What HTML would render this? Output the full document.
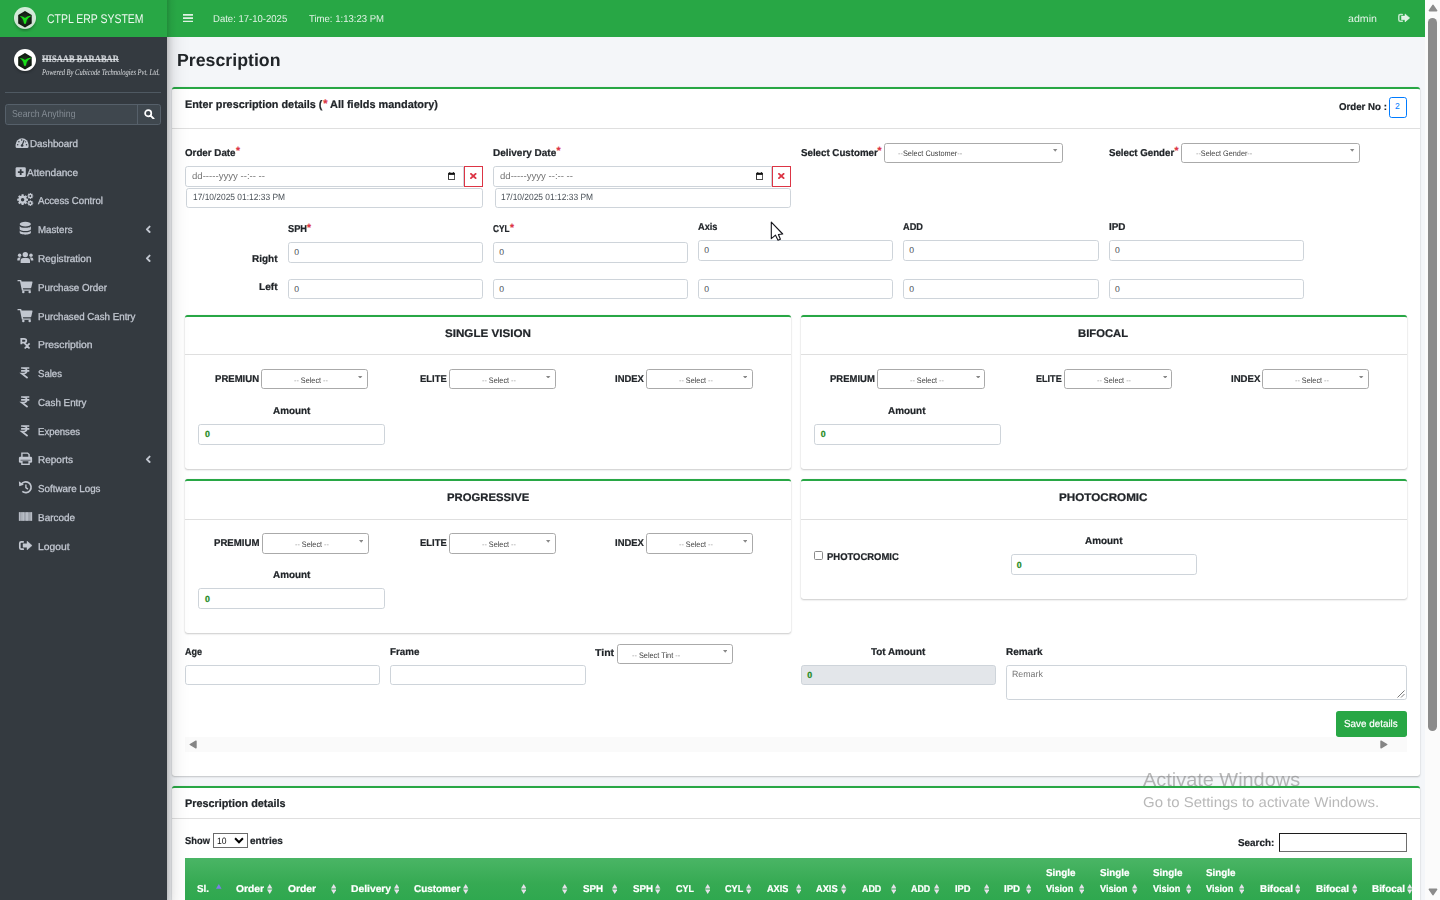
<!DOCTYPE html>
<html lang="en"><head><meta charset="utf-8"><title>Prescription</title>
<style>
html,body{margin:0;padding:0}
html{width:1440px;height:900px;overflow:hidden}
body{width:1440px;height:900px;overflow:hidden;position:relative;background:#f4f6f9;font-family:"Liberation Sans", sans-serif;color:#212529}
body>div,body>span,body>svg{position:absolute;box-sizing:border-box}
.t{white-space:pre;line-height:1;display:block;transform-origin:0 0;text-rendering:geometricPrecision}
.inp{background:#fff;border:1px solid #ced4da;border-radius:2.7px}
.sel{background:#fff;border:1px solid #aaa;border-radius:2.7px}
.card{background:#fff;border-top:2px solid #28a745;border-radius:2.7px;box-shadow:0 0 1px rgba(0,0,0,.125),0 1px 2px rgba(0,0,0,.2)}
</style></head>
<body>
<div class="card" style="left:172px;top:87px;width:1248px;height:689px"></div>
<div style="left:172.00px;top:128.00px;width:1248.00px;height:1.00px;background:#dfdfdf"></div>
<div class="card" style="left:172px;top:786px;width:1248px;height:114px;border-radius:2.7px 2.7px 0 0"></div>
<div style="left:172.00px;top:818.00px;width:1248.00px;height:1.00px;background:#dfdfdf"></div>
<span class="t" style="left:177.00px;top:52.00px;font-size:17.6px;font-weight:700;-webkit-text-stroke:0.22px;color:#212529;transform:scaleX(1.0081);-webkit-text-stroke:0;">Prescription</span>
<span class="t" style="left:185.00px;top:100.00px;font-size:11px;font-weight:700;-webkit-text-stroke:0.22px;color:#212529;transform:scaleX(0.9865);">Enter prescription details (</span>
<span class="t" style="left:323.30px;top:99.00px;font-size:11px;font-weight:700;-webkit-text-stroke:0.22px;color:#dc3545;transform:scaleX(1);">*</span>
<span class="t" style="left:329.50px;top:100.00px;font-size:11px;font-weight:700;-webkit-text-stroke:0.22px;color:#212529;transform:scaleX(0.9927);">All fields mandatory)</span>
<span class="t" style="left:1338.80px;top:103.00px;font-size:10px;font-weight:700;-webkit-text-stroke:0.22px;color:#212529;transform:scaleX(0.9686);">Order No :</span>
<div style="left:1389px;top:97px;width:18px;height:21px;border:1px solid #007bff;border-radius:2.7px;background:#fff"></div>
<span class="t" style="left:1395.10px;top:102.00px;font-size:8.6px;color:#007bff;transform:scaleX(1);">2</span>
<span class="t" style="left:185.00px;top:149.00px;font-size:10px;font-weight:700;-webkit-text-stroke:0.22px;color:#212529;transform:scaleX(0.977);">Order Date</span>
<span class="t" style="left:236.10px;top:147.00px;font-size:10.4px;font-weight:700;-webkit-text-stroke:0.22px;color:#dc3545;transform:scaleX(1);">*</span>
<span class="t" style="left:492.80px;top:149.00px;font-size:10px;font-weight:700;-webkit-text-stroke:0.22px;color:#212529;transform:scaleX(0.9972);">Delivery Date</span>
<span class="t" style="left:556.50px;top:147.00px;font-size:10.4px;font-weight:700;-webkit-text-stroke:0.22px;color:#dc3545;transform:scaleX(1);">*</span>
<span class="t" style="left:800.50px;top:149.00px;font-size:10px;font-weight:700;-webkit-text-stroke:0.22px;color:#212529;transform:scaleX(0.9731);">Select Customer</span>
<span class="t" style="left:877.50px;top:147.00px;font-size:10.4px;font-weight:700;-webkit-text-stroke:0.22px;color:#dc3545;transform:scaleX(1);">*</span>
<span class="t" style="left:1108.50px;top:149.00px;font-size:10px;font-weight:700;-webkit-text-stroke:0.22px;color:#212529;transform:scaleX(0.9693);">Select Gender</span>
<span class="t" style="left:1174.50px;top:147.00px;font-size:10.4px;font-weight:700;-webkit-text-stroke:0.22px;color:#dc3545;transform:scaleX(1);">*</span>
<div class="inp" style="left:185px;top:166px;width:279.2px;height:21px;border-radius:2.7px 0 0 2.7px"></div>
<span class="t" style="left:191.50px;top:171.00px;font-size:9.4px;color:#757575;transform:scaleX(1.0232);">dd-----yyyy --:-- --</span>
<svg style="left:447.7px;top:172.4px" width="7.2" height="8.1" viewBox="0 0 8 9"><path d="M0.5 1.5h7v7h-7z" fill="none" stroke="#111" stroke-width="1"/><path d="M0.5 1h7v2.2h-7z" fill="#111"/><path d="M2 0v1.5M6 0v1.5" stroke="#111" stroke-width="1"/></svg>
<div style="left:463.7px;top:166px;width:19.30000000000001px;height:21px;border:1px solid #dc3545;background:#fff"></div>
<svg style="left:470.3px;top:173px" width="6.6" height="6" viewBox="0 0 6.6 6"><path d="M1 0.9L5.6 5.1M5.6 0.9L1 5.1" stroke="#dc3545" stroke-width="1.9" stroke-linecap="round"/></svg>
<div class="inp" style="left:186.2px;top:188px;width:296.8px;height:20px"></div>
<span class="t" style="left:192.50px;top:193.00px;font-size:9px;color:#495057;transform:scaleX(0.9333);">17/10/2025 01:12:33 PM</span>
<div class="inp" style="left:493.3px;top:166px;width:278.99999999999994px;height:21px;border-radius:2.7px 0 0 2.7px"></div>
<span class="t" style="left:499.80px;top:171.00px;font-size:9.4px;color:#757575;transform:scaleX(1.0232);">dd-----yyyy --:-- --</span>
<svg style="left:755.8px;top:172.4px" width="7.2" height="8.1" viewBox="0 0 8 9"><path d="M0.5 1.5h7v7h-7z" fill="none" stroke="#111" stroke-width="1"/><path d="M0.5 1h7v2.2h-7z" fill="#111"/><path d="M2 0v1.5M6 0v1.5" stroke="#111" stroke-width="1"/></svg>
<div style="left:771.8px;top:166px;width:19.0px;height:21px;border:1px solid #dc3545;background:#fff"></div>
<svg style="left:778.25px;top:173px" width="6.6" height="6" viewBox="0 0 6.6 6"><path d="M1 0.9L5.6 5.1M5.6 0.9L1 5.1" stroke="#dc3545" stroke-width="1.9" stroke-linecap="round"/></svg>
<div class="inp" style="left:494.5px;top:188px;width:296.29999999999995px;height:20px"></div>
<span class="t" style="left:500.80px;top:193.00px;font-size:9px;color:#495057;transform:scaleX(0.9333);">17/10/2025 01:12:33 PM</span>
<div class="sel" style="left:884px;top:143px;width:179px;height:20px"></div>
<span class="t" style="left:898.30px;top:150.00px;font-size:8px;color:#404040;transform:scaleX(0.9198);"><span style="color:#a2a2a2">--</span>Select Customer<span style="color:#a2a2a2">--</span></span>
<svg style="left:1053.4px;top:149.4px" width="4.4" height="2.7" viewBox="0 0 4.4 2.7"><path d="M0 0h4.4L2.2 2.7z" fill="#888"/></svg>
<div class="sel" style="left:1181px;top:143px;width:179px;height:20px"></div>
<span class="t" style="left:1195.50px;top:150.00px;font-size:8px;color:#404040;transform:scaleX(0.9094);"><span style="color:#a2a2a2">--</span>Select Gender<span style="color:#a2a2a2">--</span></span>
<svg style="left:1350.4px;top:149.4px" width="4.4" height="2.7" viewBox="0 0 4.4 2.7"><path d="M0 0h4.4L2.2 2.7z" fill="#888"/></svg>
<span class="t" style="left:287.75px;top:225.00px;font-size:10px;font-weight:700;-webkit-text-stroke:0.22px;color:#212529;transform:scaleX(0.924);">SPH</span>
<span class="t" style="left:307.10px;top:224.00px;font-size:10.4px;font-weight:700;-webkit-text-stroke:0.22px;color:#dc3545;transform:scaleX(1);">*</span>
<span class="t" style="left:492.80px;top:225.00px;font-size:10px;font-weight:700;-webkit-text-stroke:0.22px;color:#212529;transform:scaleX(0.825);">CYL</span>
<span class="t" style="left:510.10px;top:224.00px;font-size:10.4px;font-weight:700;-webkit-text-stroke:0.22px;color:#dc3545;transform:scaleX(1);">*</span>
<span class="t" style="left:697.80px;top:223.00px;font-size:10px;font-weight:700;-webkit-text-stroke:0.22px;color:#212529;transform:scaleX(0.9231);">Axis</span>
<span class="t" style="left:902.80px;top:223.00px;font-size:10px;font-weight:700;-webkit-text-stroke:0.22px;color:#212529;transform:scaleX(0.9182);">ADD</span>
<span class="t" style="left:1108.50px;top:223.00px;font-size:10px;font-weight:700;-webkit-text-stroke:0.22px;color:#212529;transform:scaleX(0.9897);">IPD</span>
<span class="t" style="left:252.00px;top:255.00px;font-size:10px;font-weight:700;-webkit-text-stroke:0.22px;color:#212529;transform:scaleX(0.9982);">Right</span>
<span class="t" style="left:259.00px;top:283.00px;font-size:10px;font-weight:700;-webkit-text-stroke:0.22px;color:#212529;transform:scaleX(1.0085);">Left</span>
<div class="inp" style="left:288.25px;top:242.2px;width:195px;height:20.7px"></div>
<span class="t" style="left:294.15px;top:248.00px;font-size:8.6px;color:#3f464d;transform:scaleX(1);">0</span>
<div class="inp" style="left:288.25px;top:279.2px;width:195px;height:19.7px"></div>
<span class="t" style="left:294.15px;top:285.00px;font-size:8.6px;color:#3f464d;transform:scaleX(1);">0</span>
<div class="inp" style="left:493.3px;top:242.2px;width:195px;height:20.7px"></div>
<span class="t" style="left:499.20px;top:248.00px;font-size:8.6px;color:#3f464d;transform:scaleX(1);">0</span>
<div class="inp" style="left:493.3px;top:279.2px;width:195px;height:19.7px"></div>
<span class="t" style="left:499.20px;top:285.00px;font-size:8.6px;color:#3f464d;transform:scaleX(1);">0</span>
<div class="inp" style="left:698.3px;top:240.2px;width:195px;height:20.7px"></div>
<span class="t" style="left:704.20px;top:246.00px;font-size:8.6px;color:#3f464d;transform:scaleX(1);">0</span>
<div class="inp" style="left:698.3px;top:279.2px;width:195px;height:19.7px"></div>
<span class="t" style="left:704.20px;top:285.00px;font-size:8.6px;color:#3f464d;transform:scaleX(1);">0</span>
<div class="inp" style="left:903.3px;top:240.2px;width:195.8px;height:20.7px"></div>
<span class="t" style="left:909.20px;top:246.00px;font-size:8.6px;color:#3f464d;transform:scaleX(1);">0</span>
<div class="inp" style="left:903.3px;top:279.2px;width:195.8px;height:19.7px"></div>
<span class="t" style="left:909.20px;top:285.00px;font-size:8.6px;color:#3f464d;transform:scaleX(1);">0</span>
<div class="inp" style="left:1109px;top:240.2px;width:195px;height:20.7px"></div>
<span class="t" style="left:1114.90px;top:246.00px;font-size:8.6px;color:#3f464d;transform:scaleX(1);">0</span>
<div class="inp" style="left:1109px;top:279.2px;width:195px;height:19.7px"></div>
<span class="t" style="left:1114.90px;top:285.00px;font-size:8.6px;color:#3f464d;transform:scaleX(1);">0</span>
<div class="card" style="left:185px;top:314.6px;width:606px;height:154.39999999999998px"></div>
<div style="left:185.00px;top:354.00px;width:606.00px;height:1.00px;background:#dfdfdf"></div>
<span class="t" style="left:445.00px;top:329.00px;font-size:11px;font-weight:700;-webkit-text-stroke:0.22px;color:#212529;transform:scaleX(1.0566);">SINGLE VISION</span>
<span class="t" style="left:214.80px;top:375.00px;font-size:9.8px;font-weight:700;-webkit-text-stroke:0.22px;color:#212529;transform:scaleX(0.9759);">PREMIUN</span>
<div class="sel" style="left:261.1px;top:369.2px;width:106.69999999999999px;height:19.80000000000001px"></div>
<span class="t" style="left:293.90px;top:377.00px;font-size:8px;color:#404040;transform:scaleX(0.9078);"><span style="color:#a2a2a2">--</span> Select <span style="color:#a2a2a2">--</span></span>
<svg style="left:358.2px;top:375.5px" width="4.4" height="2.7" viewBox="0 0 4.4 2.7"><path d="M0 0h4.4L2.2 2.7z" fill="#888"/></svg>
<span class="t" style="left:419.70px;top:375.00px;font-size:9.8px;font-weight:700;-webkit-text-stroke:0.22px;color:#212529;transform:scaleX(0.9616);">ELITE</span>
<div class="sel" style="left:449.1px;top:369.2px;width:106.69999999999993px;height:19.80000000000001px"></div>
<span class="t" style="left:481.50px;top:377.00px;font-size:8px;color:#404040;transform:scaleX(0.9078);"><span style="color:#a2a2a2">--</span> Select <span style="color:#a2a2a2">--</span></span>
<svg style="left:546.1999999999999px;top:375.5px" width="4.4" height="2.7" viewBox="0 0 4.4 2.7"><path d="M0 0h4.4L2.2 2.7z" fill="#888"/></svg>
<span class="t" style="left:615.30px;top:375.00px;font-size:9.8px;font-weight:700;-webkit-text-stroke:0.22px;color:#212529;transform:scaleX(0.9648);">INDEX</span>
<div class="sel" style="left:646.4px;top:369.2px;width:106.30000000000007px;height:19.80000000000001px"></div>
<span class="t" style="left:678.80px;top:377.00px;font-size:8px;color:#404040;transform:scaleX(0.9078);"><span style="color:#a2a2a2">--</span> Select <span style="color:#a2a2a2">--</span></span>
<svg style="left:743.1px;top:375.5px" width="4.4" height="2.7" viewBox="0 0 4.4 2.7"><path d="M0 0h4.4L2.2 2.7z" fill="#888"/></svg>
<span class="t" style="left:272.60px;top:407.00px;font-size:10px;font-weight:700;-webkit-text-stroke:0.22px;color:#212529;transform:scaleX(0.9899);">Amount</span>
<div class="inp" style="left:198px;top:424.3px;width:187.10000000000002px;height:20.7px"></div>
<span class="t" style="left:204.90px;top:430.00px;font-size:8.8px;font-weight:700;-webkit-text-stroke:0.22px;color:#1e8a1e;transform:scaleX(1);">0</span>
<div class="card" style="left:801px;top:314.6px;width:606px;height:154.39999999999998px"></div>
<div style="left:801.00px;top:354.00px;width:606.00px;height:1.00px;background:#dfdfdf"></div>
<span class="t" style="left:1078.40px;top:329.00px;font-size:11px;font-weight:700;-webkit-text-stroke:0.22px;color:#212529;transform:scaleX(1.0247);">BIFOCAL</span>
<span class="t" style="left:830.10px;top:375.00px;font-size:9.8px;font-weight:700;-webkit-text-stroke:0.22px;color:#212529;transform:scaleX(0.9683);">PREMIUM</span>
<div class="sel" style="left:877.1px;top:369.2px;width:108.29999999999995px;height:19.80000000000001px"></div>
<span class="t" style="left:909.70px;top:377.00px;font-size:8px;color:#404040;transform:scaleX(0.9078);"><span style="color:#a2a2a2">--</span> Select <span style="color:#a2a2a2">--</span></span>
<svg style="left:975.8px;top:375.5px" width="4.4" height="2.7" viewBox="0 0 4.4 2.7"><path d="M0 0h4.4L2.2 2.7z" fill="#888"/></svg>
<span class="t" style="left:1036.00px;top:375.00px;font-size:9.8px;font-weight:700;-webkit-text-stroke:0.22px;color:#212529;transform:scaleX(0.9256);">ELITE</span>
<div class="sel" style="left:1064.4px;top:369.2px;width:108.0px;height:19.80000000000001px"></div>
<span class="t" style="left:1097.00px;top:377.00px;font-size:8px;color:#404040;transform:scaleX(0.9105);"><span style="color:#a2a2a2">--</span> Select <span style="color:#a2a2a2">--</span></span>
<svg style="left:1162.8000000000002px;top:375.5px" width="4.4" height="2.7" viewBox="0 0 4.4 2.7"><path d="M0 0h4.4L2.2 2.7z" fill="#888"/></svg>
<span class="t" style="left:1230.50px;top:375.00px;font-size:9.8px;font-weight:700;-webkit-text-stroke:0.22px;color:#212529;transform:scaleX(0.9815);">INDEX</span>
<div class="sel" style="left:1262.1px;top:369.2px;width:106.90000000000009px;height:19.80000000000001px"></div>
<span class="t" style="left:1294.50px;top:377.00px;font-size:8px;color:#404040;transform:scaleX(0.9078);"><span style="color:#a2a2a2">--</span> Select <span style="color:#a2a2a2">--</span></span>
<svg style="left:1359.4px;top:375.5px" width="4.4" height="2.7" viewBox="0 0 4.4 2.7"><path d="M0 0h4.4L2.2 2.7z" fill="#888"/></svg>
<span class="t" style="left:888.40px;top:407.00px;font-size:10px;font-weight:700;-webkit-text-stroke:0.22px;color:#212529;transform:scaleX(0.9926);">Amount</span>
<div class="inp" style="left:813.9px;top:424.3px;width:186.89999999999998px;height:20.7px"></div>
<span class="t" style="left:820.80px;top:430.00px;font-size:8.8px;font-weight:700;-webkit-text-stroke:0.22px;color:#1e8a1e;transform:scaleX(1);">0</span>
<div class="card" style="left:185px;top:479px;width:606px;height:154.29999999999995px"></div>
<div style="left:185.00px;top:519.00px;width:606.00px;height:1.00px;background:#dfdfdf"></div>
<span class="t" style="left:446.80px;top:493.00px;font-size:11px;font-weight:700;-webkit-text-stroke:0.22px;color:#212529;transform:scaleX(1.0277);">PROGRESSIVE</span>
<span class="t" style="left:213.90px;top:539.00px;font-size:9.8px;font-weight:700;-webkit-text-stroke:0.22px;color:#212529;transform:scaleX(0.9813);">PREMIUM</span>
<div class="sel" style="left:262.4px;top:533.2px;width:106.30000000000001px;height:20.799999999999955px"></div>
<span class="t" style="left:294.70px;top:541.00px;font-size:8px;color:#404040;transform:scaleX(0.9078);"><span style="color:#a2a2a2">--</span> Select <span style="color:#a2a2a2">--</span></span>
<svg style="left:359.09999999999997px;top:540.0px" width="4.4" height="2.7" viewBox="0 0 4.4 2.7"><path d="M0 0h4.4L2.2 2.7z" fill="#888"/></svg>
<span class="t" style="left:419.70px;top:539.00px;font-size:9.8px;font-weight:700;-webkit-text-stroke:0.22px;color:#212529;transform:scaleX(0.9616);">ELITE</span>
<div class="sel" style="left:449.1px;top:533.2px;width:106.69999999999993px;height:20.799999999999955px"></div>
<span class="t" style="left:481.50px;top:541.00px;font-size:8px;color:#404040;transform:scaleX(0.9078);"><span style="color:#a2a2a2">--</span> Select <span style="color:#a2a2a2">--</span></span>
<svg style="left:546.1999999999999px;top:540.0px" width="4.4" height="2.7" viewBox="0 0 4.4 2.7"><path d="M0 0h4.4L2.2 2.7z" fill="#888"/></svg>
<span class="t" style="left:615.30px;top:539.00px;font-size:9.8px;font-weight:700;-webkit-text-stroke:0.22px;color:#212529;transform:scaleX(0.9648);">INDEX</span>
<div class="sel" style="left:646.4px;top:533.2px;width:106.30000000000007px;height:20.799999999999955px"></div>
<span class="t" style="left:678.80px;top:541.00px;font-size:8px;color:#404040;transform:scaleX(0.9078);"><span style="color:#a2a2a2">--</span> Select <span style="color:#a2a2a2">--</span></span>
<svg style="left:743.1px;top:540.0px" width="4.4" height="2.7" viewBox="0 0 4.4 2.7"><path d="M0 0h4.4L2.2 2.7z" fill="#888"/></svg>
<span class="t" style="left:272.60px;top:571.00px;font-size:10px;font-weight:700;-webkit-text-stroke:0.22px;color:#212529;transform:scaleX(0.9899);">Amount</span>
<div class="inp" style="left:198px;top:588.3px;width:187.10000000000002px;height:20.7px"></div>
<span class="t" style="left:204.90px;top:595.00px;font-size:8.8px;font-weight:700;-webkit-text-stroke:0.22px;color:#1e8a1e;transform:scaleX(1);">0</span>
<div class="card" style="left:801px;top:479px;width:606px;height:120px"></div>
<div style="left:801.00px;top:519.00px;width:606.00px;height:1.00px;background:#dfdfdf"></div>
<span class="t" style="left:1059.40px;top:493.00px;font-size:11px;font-weight:700;-webkit-text-stroke:0.22px;color:#212529;transform:scaleX(1.0595);">PHOTOCROMIC</span>
<div style="left:814px;top:551.4px;width:8.8px;height:8.8px;border:1px solid #8a8a8a;border-radius:1.6px;background:#fff"></div>
<span class="t" style="left:826.50px;top:553.00px;font-size:9.8px;font-weight:700;-webkit-text-stroke:0.22px;color:#212529;transform:scaleX(0.9652);">PHOTOCROMIC</span>
<span class="t" style="left:1084.70px;top:537.00px;font-size:10px;font-weight:700;-webkit-text-stroke:0.22px;color:#212529;transform:scaleX(0.9926);">Amount</span>
<div class="inp" style="left:1010.7px;top:554.2px;width:186px;height:21px"></div>
<span class="t" style="left:1016.80px;top:561.00px;font-size:8.8px;font-weight:700;-webkit-text-stroke:0.22px;color:#1e8a1e;transform:scaleX(1);">0</span>
<span class="t" style="left:184.90px;top:648.00px;font-size:10px;font-weight:700;-webkit-text-stroke:0.22px;color:#212529;transform:scaleX(0.9045);">Age</span>
<div class="inp" style="left:184.7px;top:665.4px;width:195.1px;height:19.4px"></div>
<span class="t" style="left:390.40px;top:648.00px;font-size:10px;font-weight:700;-webkit-text-stroke:0.22px;color:#212529;transform:scaleX(0.9795);">Frame</span>
<div class="inp" style="left:390px;top:665.4px;width:196px;height:19.4px"></div>
<span class="t" style="left:595.30px;top:649.00px;font-size:10px;font-weight:700;-webkit-text-stroke:0.22px;color:#212529;transform:scaleX(1.052);">Tint</span>
<div class="sel" style="left:617.1px;top:644px;width:115.60000000000002px;height:19.799999999999955px"></div>
<span class="t" style="left:631.70px;top:652.00px;font-size:8px;color:#404040;transform:scaleX(0.917);"><span style="color:#a2a2a2">--</span> Select Tint <span style="color:#a2a2a2">--</span></span>
<svg style="left:723.1px;top:650.3px" width="4.4" height="2.7" viewBox="0 0 4.4 2.7"><path d="M0 0h4.4L2.2 2.7z" fill="#888"/></svg>
<span class="t" style="left:871.20px;top:648.00px;font-size:10px;font-weight:700;-webkit-text-stroke:0.22px;color:#212529;transform:scaleX(0.9857);">Tot Amount</span>
<div class="inp" style="left:800.8px;top:665.2px;width:195.5px;height:19.4px;background:#e3e6ea"></div>
<span class="t" style="left:807.30px;top:671.00px;font-size:8.8px;font-weight:700;-webkit-text-stroke:0.22px;color:#1e8a1e;transform:scaleX(1);">0</span>
<span class="t" style="left:1006.20px;top:648.00px;font-size:10px;font-weight:700;-webkit-text-stroke:0.22px;color:#212529;transform:scaleX(0.9972);">Remark</span>
<div class="inp" style="left:1006.2px;top:665.2px;width:400.8px;height:34.4px"></div>
<span class="t" style="left:1012.00px;top:670.00px;font-size:9px;color:#757575;transform:scaleX(0.9773);">Remark</span>
<svg style="left:1397px;top:690px" width="8" height="8" viewBox="0 0 8 8"><path d="M7.5 0.5L0.5 7.5M7.5 4L4 7.5" stroke="#555" stroke-width="0.8"/></svg>
<div style="left:1336.2px;top:711.3px;width:70.8px;height:25.3px;background:#28a745;border-radius:2.7px"></div>
<span class="t" style="left:1344.30px;top:720.00px;font-size:10.2px;color:#fff;transform:scaleX(0.9676);-webkit-text-stroke:0.2px #fff;">Save details</span>
<div style="left:185.00px;top:736.60px;width:1222.00px;height:15.40px;background:#fafafa"></div>
<svg style="left:189px;top:740px" width="8" height="9" viewBox="0 0 8 9"><path d="M7 1.2v6.6L1.2 4.5z" fill="#858585" stroke="#858585" stroke-width="1.4" stroke-linejoin="round"/></svg>
<svg style="left:1380.4px;top:740px" width="8" height="9" viewBox="0 0 8 9"><path d="M1 1.2v6.6L6.8 4.5z" fill="#858585" stroke="#858585" stroke-width="1.4" stroke-linejoin="round"/></svg>
<span class="t" style="left:185.10px;top:799.00px;font-size:11px;font-weight:700;-webkit-text-stroke:0.22px;color:#212529;transform:scaleX(0.9844);">Prescription details</span>
<span class="t" style="left:185.10px;top:837.00px;font-size:10px;font-weight:700;-webkit-text-stroke:0.22px;color:#212529;transform:scaleX(0.9336);">Show</span>
<div style="left:213px;top:833px;width:35px;height:15px;border:1px solid #6b6b6b;background:#fff"></div>
<span class="t" style="left:216.60px;top:837.00px;font-size:9.2px;color:#111;transform:scaleX(0.9282);">10</span>
<svg style="left:234px;top:837.2px" width="10" height="7" viewBox="0 0 10 7"><path d="M1.1 1.2L5 5.2L8.9 1.2" fill="none" stroke="#000" stroke-width="2"/></svg>
<span class="t" style="left:250.40px;top:837.00px;font-size:10px;font-weight:700;-webkit-text-stroke:0.22px;color:#212529;transform:scaleX(1.0031);">entries</span>
<span class="t" style="left:1237.70px;top:839.00px;font-size:10px;font-weight:700;-webkit-text-stroke:0.22px;color:#212529;transform:scaleX(0.9867);">Search:</span>
<div style="left:1279.3px;top:833.4px;width:127.7px;height:18.4px;border:1.3px solid;border-color:#1c1c1c #6e6e6e #6e6e6e #1c1c1c;background:#fff"></div>
<div style="left:185.00px;top:857.80px;width:1227.00px;height:42.20px;background:linear-gradient(180deg,#4ab565 0%,#36aa53 60%,#2fa84f 100%)"></div>
<span class="t" style="left:197.10px;top:885.00px;font-size:10px;font-weight:700;-webkit-text-stroke:0.22px;color:#fff;transform:scaleX(0.9808);">Sl.</span>
<svg style="left:216.1px;top:884.4px" width="5.6" height="4.8" viewBox="0 0 5.6 4.8"><path d="M2.8 0L5.6 4.8H0z" fill="#7d7de8"/></svg>
<span class="t" style="left:236.20px;top:885.00px;font-size:10px;font-weight:700;-webkit-text-stroke:0.22px;color:#fff;transform:scaleX(1.0281);">Order</span>
<svg style="left:267.3px;top:884.4px" width="5.4" height="10.2" viewBox="0 0 5.4 10.2"><path d="M2.7 0L5.4 4.4H0z" fill="#e6e2ea"/><path d="M0 5.6h5.4L2.7 10z" fill="#e6e2ea"/></svg>
<span class="t" style="left:287.70px;top:885.00px;font-size:10px;font-weight:700;-webkit-text-stroke:0.22px;color:#fff;transform:scaleX(1.0318);">Order</span>
<svg style="left:330.90000000000003px;top:884.4px" width="5.4" height="10.2" viewBox="0 0 5.4 10.2"><path d="M2.7 0L5.4 4.4H0z" fill="#e6e2ea"/><path d="M0 5.6h5.4L2.7 10z" fill="#e6e2ea"/></svg>
<span class="t" style="left:350.80px;top:885.00px;font-size:10px;font-weight:700;-webkit-text-stroke:0.22px;color:#fff;transform:scaleX(1.0303);">Delivery</span>
<svg style="left:394.0px;top:884.4px" width="5.4" height="10.2" viewBox="0 0 5.4 10.2"><path d="M2.7 0L5.4 4.4H0z" fill="#e6e2ea"/><path d="M0 5.6h5.4L2.7 10z" fill="#e6e2ea"/></svg>
<span class="t" style="left:413.90px;top:885.00px;font-size:10px;font-weight:700;-webkit-text-stroke:0.22px;color:#fff;transform:scaleX(0.9917);">Customer</span>
<svg style="left:463.3px;top:884.4px" width="5.4" height="10.2" viewBox="0 0 5.4 10.2"><path d="M2.7 0L5.4 4.4H0z" fill="#e6e2ea"/><path d="M0 5.6h5.4L2.7 10z" fill="#e6e2ea"/></svg>
<svg style="left:521.0999999999999px;top:884.4px" width="5.4" height="10.2" viewBox="0 0 5.4 10.2"><path d="M2.7 0L5.4 4.4H0z" fill="#e6e2ea"/><path d="M0 5.6h5.4L2.7 10z" fill="#e6e2ea"/></svg>
<svg style="left:562.4px;top:884.4px" width="5.4" height="10.2" viewBox="0 0 5.4 10.2"><path d="M2.7 0L5.4 4.4H0z" fill="#e6e2ea"/><path d="M0 5.6h5.4L2.7 10z" fill="#e6e2ea"/></svg>
<span class="t" style="left:582.80px;top:885.00px;font-size:10px;font-weight:700;-webkit-text-stroke:0.22px;color:#fff;transform:scaleX(0.9775);">SPH</span>
<svg style="left:611.6999999999999px;top:884.4px" width="5.4" height="10.2" viewBox="0 0 5.4 10.2"><path d="M2.7 0L5.4 4.4H0z" fill="#e6e2ea"/><path d="M0 5.6h5.4L2.7 10z" fill="#e6e2ea"/></svg>
<span class="t" style="left:632.60px;top:885.00px;font-size:10px;font-weight:700;-webkit-text-stroke:0.22px;color:#fff;transform:scaleX(0.9775);">SPH</span>
<svg style="left:655.3px;top:884.4px" width="5.4" height="10.2" viewBox="0 0 5.4 10.2"><path d="M2.7 0L5.4 4.4H0z" fill="#e6e2ea"/><path d="M0 5.6h5.4L2.7 10z" fill="#e6e2ea"/></svg>
<span class="t" style="left:675.70px;top:885.00px;font-size:10px;font-weight:700;-webkit-text-stroke:0.22px;color:#fff;transform:scaleX(0.895);">CYL</span>
<svg style="left:705.0999999999999px;top:884.4px" width="5.4" height="10.2" viewBox="0 0 5.4 10.2"><path d="M2.7 0L5.4 4.4H0z" fill="#e6e2ea"/><path d="M0 5.6h5.4L2.7 10z" fill="#e6e2ea"/></svg>
<span class="t" style="left:725.10px;top:885.00px;font-size:10px;font-weight:700;-webkit-text-stroke:0.22px;color:#fff;transform:scaleX(0.91);">CYL</span>
<svg style="left:746.4px;top:884.4px" width="5.4" height="10.2" viewBox="0 0 5.4 10.2"><path d="M2.7 0L5.4 4.4H0z" fill="#e6e2ea"/><path d="M0 5.6h5.4L2.7 10z" fill="#e6e2ea"/></svg>
<span class="t" style="left:767.30px;top:885.00px;font-size:10px;font-weight:700;-webkit-text-stroke:0.22px;color:#fff;transform:scaleX(0.9167);">AXIS</span>
<svg style="left:795.6999999999999px;top:884.4px" width="5.4" height="10.2" viewBox="0 0 5.4 10.2"><path d="M2.7 0L5.4 4.4H0z" fill="#e6e2ea"/><path d="M0 5.6h5.4L2.7 10z" fill="#e6e2ea"/></svg>
<span class="t" style="left:816.40px;top:885.00px;font-size:10px;font-weight:700;-webkit-text-stroke:0.22px;color:#fff;transform:scaleX(0.9253);">AXIS</span>
<svg style="left:841.3px;top:884.4px" width="5.4" height="10.2" viewBox="0 0 5.4 10.2"><path d="M2.7 0L5.4 4.4H0z" fill="#e6e2ea"/><path d="M0 5.6h5.4L2.7 10z" fill="#e6e2ea"/></svg>
<span class="t" style="left:861.70px;top:885.00px;font-size:10px;font-weight:700;-webkit-text-stroke:0.22px;color:#fff;transform:scaleX(0.8859);">ADD</span>
<svg style="left:890.5999999999999px;top:884.4px" width="5.4" height="10.2" viewBox="0 0 5.4 10.2"><path d="M2.7 0L5.4 4.4H0z" fill="#e6e2ea"/><path d="M0 5.6h5.4L2.7 10z" fill="#e6e2ea"/></svg>
<span class="t" style="left:910.60px;top:885.00px;font-size:10px;font-weight:700;-webkit-text-stroke:0.22px;color:#fff;transform:scaleX(0.8859);">ADD</span>
<svg style="left:934.1999999999999px;top:884.4px" width="5.4" height="10.2" viewBox="0 0 5.4 10.2"><path d="M2.7 0L5.4 4.4H0z" fill="#e6e2ea"/><path d="M0 5.6h5.4L2.7 10z" fill="#e6e2ea"/></svg>
<span class="t" style="left:955.10px;top:885.00px;font-size:10px;font-weight:700;-webkit-text-stroke:0.22px;color:#fff;transform:scaleX(0.9357);">IPD</span>
<svg style="left:984.0px;top:884.4px" width="5.4" height="10.2" viewBox="0 0 5.4 10.2"><path d="M2.7 0L5.4 4.4H0z" fill="#e6e2ea"/><path d="M0 5.6h5.4L2.7 10z" fill="#e6e2ea"/></svg>
<span class="t" style="left:1003.90px;top:885.00px;font-size:10px;font-weight:700;-webkit-text-stroke:0.22px;color:#fff;transform:scaleX(0.9657);">IPD</span>
<svg style="left:1025.7px;top:884.4px" width="5.4" height="10.2" viewBox="0 0 5.4 10.2"><path d="M2.7 0L5.4 4.4H0z" fill="#e6e2ea"/><path d="M0 5.6h5.4L2.7 10z" fill="#e6e2ea"/></svg>
<span class="t" style="left:1046.20px;top:869.00px;font-size:10px;font-weight:700;-webkit-text-stroke:0.22px;color:#fff;transform:scaleX(0.9828);">Single</span>
<span class="t" style="left:1046.20px;top:885.00px;font-size:10px;font-weight:700;-webkit-text-stroke:0.22px;color:#fff;transform:scaleX(0.9119);">Vision</span>
<svg style="left:1079.1px;top:884.4px" width="5.4" height="10.2" viewBox="0 0 5.4 10.2"><path d="M2.7 0L5.4 4.4H0z" fill="#e6e2ea"/><path d="M0 5.6h5.4L2.7 10z" fill="#e6e2ea"/></svg>
<span class="t" style="left:1099.50px;top:869.00px;font-size:10px;font-weight:700;-webkit-text-stroke:0.22px;color:#fff;transform:scaleX(0.9828);">Single</span>
<span class="t" style="left:1099.50px;top:885.00px;font-size:10px;font-weight:700;-webkit-text-stroke:0.22px;color:#fff;transform:scaleX(0.9119);">Vision</span>
<svg style="left:1132.3px;top:884.4px" width="5.4" height="10.2" viewBox="0 0 5.4 10.2"><path d="M2.7 0L5.4 4.4H0z" fill="#e6e2ea"/><path d="M0 5.6h5.4L2.7 10z" fill="#e6e2ea"/></svg>
<span class="t" style="left:1152.80px;top:869.00px;font-size:10px;font-weight:700;-webkit-text-stroke:0.22px;color:#fff;transform:scaleX(0.9828);">Single</span>
<span class="t" style="left:1152.80px;top:885.00px;font-size:10px;font-weight:700;-webkit-text-stroke:0.22px;color:#fff;transform:scaleX(0.9119);">Vision</span>
<svg style="left:1185.7px;top:884.4px" width="5.4" height="10.2" viewBox="0 0 5.4 10.2"><path d="M2.7 0L5.4 4.4H0z" fill="#e6e2ea"/><path d="M0 5.6h5.4L2.7 10z" fill="#e6e2ea"/></svg>
<span class="t" style="left:1205.70px;top:869.00px;font-size:10px;font-weight:700;-webkit-text-stroke:0.22px;color:#fff;transform:scaleX(0.9828);">Single</span>
<span class="t" style="left:1205.70px;top:885.00px;font-size:10px;font-weight:700;-webkit-text-stroke:0.22px;color:#fff;transform:scaleX(0.9119);">Vision</span>
<svg style="left:1238.6px;top:884.4px" width="5.4" height="10.2" viewBox="0 0 5.4 10.2"><path d="M2.7 0L5.4 4.4H0z" fill="#e6e2ea"/><path d="M0 5.6h5.4L2.7 10z" fill="#e6e2ea"/></svg>
<span class="t" style="left:1259.50px;top:885.00px;font-size:10px;font-weight:700;-webkit-text-stroke:0.22px;color:#fff;transform:scaleX(0.9867);">Bifocal</span>
<svg style="left:1295.1px;top:884.4px" width="5.4" height="10.2" viewBox="0 0 5.4 10.2"><path d="M2.7 0L5.4 4.4H0z" fill="#e6e2ea"/><path d="M0 5.6h5.4L2.7 10z" fill="#e6e2ea"/></svg>
<span class="t" style="left:1315.90px;top:885.00px;font-size:10px;font-weight:700;-webkit-text-stroke:0.22px;color:#fff;transform:scaleX(0.9897);">Bifocal</span>
<svg style="left:1351.5px;top:884.4px" width="5.4" height="10.2" viewBox="0 0 5.4 10.2"><path d="M2.7 0L5.4 4.4H0z" fill="#e6e2ea"/><path d="M0 5.6h5.4L2.7 10z" fill="#e6e2ea"/></svg>
<span class="t" style="left:1372.40px;top:885.00px;font-size:10px;font-weight:700;-webkit-text-stroke:0.22px;color:#fff;transform:scaleX(0.9867);">Bifocal</span>
<svg style="left:1407.3px;top:884.4px" width="5.4" height="10.2" viewBox="0 0 5.4 10.2"><path d="M2.7 0L5.4 4.4H0z" fill="#e6e2ea"/><path d="M0 5.6h5.4L2.7 10z" fill="#e6e2ea"/></svg>
<div style="left:1412.00px;top:857.00px;width:8.00px;height:43.00px;background:#fff"></div>
<div style="left:0;top:0;width:167px;height:900px;background:#343a40;box-shadow:0 9px 19px rgba(0,0,0,.25),0 7px 7px rgba(0,0,0,.22)"></div>
<div style="left:0.00px;top:0.00px;width:1425.00px;height:37.00px;background:#28a745"></div>
<div style="left:167.00px;top:0.00px;width:10.00px;height:37.00px;background:linear-gradient(90deg,rgba(0,0,0,.16),rgba(0,0,0,.05) 40%,rgba(0,0,0,0))"></div>
<svg style="left:13.1px;top:6.1px" width="24" height="26" viewBox="0 0 24 26">
<defs><radialGradient id="g1" cx="50%" cy="50%" r="60%"><stop offset="0" stop-color="#2a3a2a"/><stop offset="1" stop-color="#061006"/></radialGradient></defs>
<ellipse cx="12" cy="14.4" rx="10.2" ry="10" fill="rgba(0,0,0,.32)" style="filter:blur(1.6px)"/>
<circle cx="12" cy="12" r="11" fill="rgba(255,255,255,.8)"/>
<path d="M12 5L18.7 8.9V17.4L12 21.4L5.2 17.4V8.9z" fill="url(#g1)"/>
<path d="M7.4,10Q10.2,10.4 12,11.9Q13.9,10.4 17.7,9.6L17.9,10.2Q14.9,11.9 13.8,14L12.9,17.7H11.1L10.2,14Q9.2,12 7.2,10.6Z" fill="#19e019"/>
</svg>
<span class="t" style="left:46.50px;top:13.00px;font-size:12.6px;color:rgba(255,255,255,.92);transform:scaleX(0.8306);">CTPL ERP SYSTEM</span>
<svg style="left:183px;top:13.8px" width="10" height="8.4" viewBox="0 0 10 8.4"><path d="M0 0.8h10M0 4.2h10M0 7.6h10" stroke="rgba(255,255,255,.85)" stroke-width="1.7"/></svg>
<span class="t" style="left:213.30px;top:15.00px;font-size:10px;color:rgba(255,255,255,.87);transform:scaleX(0.9532);">Date: 17-10-2025</span>
<span class="t" style="left:309.00px;top:15.00px;font-size:10px;color:rgba(255,255,255,.87);transform:scaleX(0.9547);">Time: 1:13:23 PM</span>
<span class="t" style="left:1347.80px;top:15.00px;font-size:10.2px;color:rgba(255,255,255,.87);transform:scaleX(1.0414);">admin</span>
<svg style="left:1396px;top:11px" width="16" height="14" viewBox="1396 11 16 14"><path d="M1402.3,14.6H1400.3Q1398.8,14.6 1398.8,16.1V19.7Q1398.8,21.2 1400.3,21.2H1402.3" fill="none" stroke="rgba(255,255,255,.72)" stroke-width="1.5" stroke-linecap="round"/><path d="M1401.5,16.1H1405V13.9L1409.7,17.9L1405,21.9V19.7H1401.5Z" fill="rgba(255,255,255,.85)" stroke="rgba(255,255,255,.85)" stroke-width=".5" stroke-linejoin="round"/></svg>
<svg style="left:13.1px;top:48.1px" width="24" height="26" viewBox="0 0 24 26">
<defs><radialGradient id="g2" cx="50%" cy="50%" r="60%"><stop offset="0" stop-color="#2a3a2a"/><stop offset="1" stop-color="#061006"/></radialGradient></defs>
<ellipse cx="12" cy="14.4" rx="10.2" ry="10" fill="rgba(0,0,0,.32)" style="filter:blur(1.6px)"/>
<circle cx="12" cy="12" r="11" fill="#fff"/>
<path d="M12 5L18.7 8.9V17.4L12 21.4L5.2 17.4V8.9z" fill="url(#g2)"/>
<path d="M7.4,10Q10.2,10.4 12,11.9Q13.9,10.4 17.7,9.6L17.9,10.2Q14.9,11.9 13.8,14L12.9,17.7H11.1L10.2,14Q9.2,12 7.2,10.6Z" fill="#19e019"/>
</svg>
<span class="t" style="left:42.30px;top:55.00px;font-size:9.8px;font-weight:700;-webkit-text-stroke:0.22px;color:rgba(235,238,242,.78);transform:scaleX(0.8692);font-family:&quot;Liberation Serif&quot;,serif;text-decoration:line-through;">HISAAB BARABAR</span>
<span class="t" style="left:42.30px;top:68.00px;font-size:8.8px;color:rgba(240,242,245,.86);transform:scaleX(0.742);font-family:&quot;Liberation Serif&quot;,serif;font-style:italic;">Powered By Cubicode Technologies Pvt. Ltd.</span>
<div style="left:5.00px;top:92.00px;width:156.00px;height:1.00px;background:#4f5962"></div>
<div style="left:5px;top:104.2px;width:156px;height:20.6px;background:#3f474e;border:1px solid #56606a;border-radius:2.7px"></div>
<div style="left:137.20px;top:105.00px;width:1.00px;height:19.00px;background:#56606a"></div>
<span class="t" style="left:11.50px;top:110.00px;font-size:10px;color:#838b93;transform:scaleX(0.8719);">Search Anything</span>
<svg style="left:144px;top:108.6px" width="10.5" height="10.5" viewBox="0 0 10.5 10.5"><circle cx="4.2" cy="4.2" r="3.1" fill="none" stroke="#fff" stroke-width="1.7"/><path d="M6.6 6.6L9.6 9.6" stroke="#fff" stroke-width="1.9" stroke-linecap="round"/></svg>
<span class="t" style="left:30.00px;top:140.00px;font-size:10px;color:#c2c7d0;transform:scaleX(0.9812);-webkit-text-stroke:0.3px #c2c7d0;">Dashboard</span>
<svg style="left:14px;top:133px" width="22" height="18" viewBox="14 -14 22 18"><path d="M15.6,-2.2A6.5,6.5 0 0 1 28.6,-2.2V-0.2Q28.6,0.9 27.5,0.9H16.7Q15.6,0.9 15.6,-0.2Z" fill="#c2c7d0"/><path d="M22.1,-1.6L23.9,-6.4" stroke="#343a40" stroke-width="1.25" stroke-linecap="round"/><circle cx="22.1" cy="-1.5" r="1.35" fill="#343a40"/><circle cx="17.7" cy="-2.2" r=".75" fill="#343a40"/><circle cx="18.9" cy="-5.3" r=".75" fill="#343a40"/><circle cx="21.6" cy="-7" r=".75" fill="#343a40"/><circle cx="26.5" cy="-2.2" r=".75" fill="#343a40"/><circle cx="25.6" cy="-5.2" r=".6" fill="#343a40"/></svg>
<span class="t" style="left:27.00px;top:169.00px;font-size:10px;color:#c2c7d0;transform:scaleX(1.0077);-webkit-text-stroke:0.3px #c2c7d0;">Attendance</span>
<svg style="left:14px;top:162px" width="22" height="18" viewBox="14 -14 22 18"><rect x="15.6" y="-8.8" width="10.2" height="9.7" rx="1.3" fill="#c2c7d0"/><path d="M20.7,-6.8V-1.1M17.9,-3.95H23.5" stroke="#343a40" stroke-width="1.8"/></svg>
<span class="t" style="left:37.50px;top:197.00px;font-size:10px;color:#c2c7d0;transform:scaleX(0.9665);-webkit-text-stroke:0.3px #c2c7d0;">Access Control</span>
<svg style="left:14px;top:190px" width="22" height="18" viewBox="14 -14 22 18"><path fill-rule="evenodd" d="M26.64,-5.43L28.01,-5.31L28.01,-3.29L26.64,-3.17L26.26,-2.24L27.14,-1.19L25.71,0.24L24.66,-0.64L23.73,-0.26L23.61,1.11L21.59,1.11L21.47,-0.26L20.54,-0.64L19.49,0.24L18.06,-1.19L18.94,-2.24L18.56,-3.17L17.19,-3.29L17.19,-5.31L18.56,-5.43L18.94,-6.36L18.06,-7.41L19.49,-8.84L20.54,-7.96L21.47,-8.34L21.59,-9.71L23.61,-9.71L23.73,-8.34L24.66,-7.96L25.71,-8.84L27.14,-7.41L26.26,-6.36ZM24.35,-4.30A1.75,1.75 0 1 0 20.85,-4.30A1.75,1.75 0 1 0 24.35,-4.30Z" fill="#c2c7d0"/><path fill-rule="evenodd" d="M32.42,-8.59L33.25,-8.55L33.25,-7.45L32.42,-7.41L32.22,-6.92L32.77,-6.30L32.00,-5.53L31.38,-6.08L30.89,-5.88L30.85,-5.05L29.75,-5.05L29.71,-5.88L29.22,-6.08L28.60,-5.53L27.83,-6.30L28.38,-6.92L28.18,-7.41L27.35,-7.45L27.35,-8.55L28.18,-8.59L28.38,-9.08L27.83,-9.70L28.60,-10.47L29.22,-9.92L29.71,-10.12L29.75,-10.95L30.85,-10.95L30.89,-10.12L31.38,-9.92L32.00,-10.47L32.77,-9.70L32.22,-9.08ZM31.20,-8.00A0.9,0.9 0 1 0 29.40,-8.00A0.9,0.9 0 1 0 31.20,-8.00Z" fill="#c2c7d0"/><path fill-rule="evenodd" d="M32.42,-1.49L33.25,-1.45L33.25,-0.35L32.42,-0.31L32.22,0.18L32.77,0.80L32.00,1.57L31.38,1.02L30.89,1.22L30.85,2.05L29.75,2.05L29.71,1.22L29.22,1.02L28.60,1.57L27.83,0.80L28.38,0.18L28.18,-0.31L27.35,-0.35L27.35,-1.45L28.18,-1.49L28.38,-1.98L27.83,-2.60L28.60,-3.37L29.22,-2.82L29.71,-3.02L29.75,-3.85L30.85,-3.85L30.89,-3.02L31.38,-2.82L32.00,-3.37L32.77,-2.60L32.22,-1.98ZM31.20,-0.90A0.9,0.9 0 1 0 29.40,-0.90A0.9,0.9 0 1 0 31.20,-0.90Z" fill="#c2c7d0"/></svg>
<span class="t" style="left:37.50px;top:226.00px;font-size:10px;color:#c2c7d0;transform:scaleX(0.9701);-webkit-text-stroke:0.3px #c2c7d0;">Masters</span>
<svg style="left:14px;top:219px" width="22" height="18" viewBox="14 -14 22 18"><ellipse cx="25.3" cy="-8.9" rx="5.6" ry="2.3" fill="#c2c7d0"/><path d="M19.7,-7.1C19.7,-4.6 30.9,-4.6 30.9,-7.1V-3.7C30.9,-1.3 19.7,-1.3 19.7,-3.7Z" fill="#c2c7d0"/><path d="M19.7,-2.5C19.7,-0.1 30.9,-0.1 30.9,-2.5V-0.4C30.9,2.4 19.7,2.4 19.7,-0.4Z" fill="#c2c7d0"/></svg>
<span class="t" style="left:37.50px;top:255.00px;font-size:10px;color:#c2c7d0;transform:scaleX(1.0026);-webkit-text-stroke:0.3px #c2c7d0;">Registration</span>
<svg style="left:14px;top:248px" width="22" height="18" viewBox="14 -14 22 18"><circle cx="25.3" cy="-7.4" r="2.7" fill="#c2c7d0"/><path d="M20.6,1V-1.3Q20.6,-4.1 23.4,-4.1H27.2Q30,-4.1 30,-1.3V1Z" fill="#c2c7d0"/><circle cx="19.6" cy="-6.8" r="1.75" fill="#c2c7d0"/><circle cx="31" cy="-6.8" r="1.75" fill="#c2c7d0"/><path d="M17.3,-1.5V-2.7Q17.3,-4.4 19,-4.4H21Q19.7,-3.2 19.7,-1.5Z" fill="#c2c7d0"/><path d="M33.3,-1.5V-2.7Q33.3,-4.4 31.6,-4.4H29.6Q30.9,-3.2 30.9,-1.5Z" fill="#c2c7d0"/></svg>
<span class="t" style="left:37.50px;top:284.00px;font-size:10px;color:#c2c7d0;transform:scaleX(0.9774);-webkit-text-stroke:0.3px #c2c7d0;">Purchase Order</span>
<svg style="left:14px;top:277px" width="22" height="18" viewBox="14 -14 22 18"><path d="M18,-11H20.7Q21.3,-11 21.4,-10.4L21.6,-9.5H31.9Q32.7,-9.5 32.5,-8.7L31.3,-3.5Q31.1,-2.8 30.4,-2.8H22.9L23.2,-1.5H30.3Q30.9,-1.5 30.9,-0.9Q30.9,-0.2 30.3,-0.2H22.4Q21.9,-0.2 21.8,-0.7L20,-9.7H18Q17.4,-9.7 17.4,-10.35Q17.4,-11 18,-11Z" fill="#c2c7d0"/><circle cx="23.3" cy="1" r="1.25" fill="#c2c7d0"/><circle cx="29.7" cy="1" r="1.25" fill="#c2c7d0"/></svg>
<span class="t" style="left:37.50px;top:313.00px;font-size:10px;color:#c2c7d0;transform:scaleX(0.9744);-webkit-text-stroke:0.3px #c2c7d0;">Purchased Cash Entry</span>
<svg style="left:14px;top:306px" width="22" height="18" viewBox="14 -14 22 18"><path d="M18,-11H20.7Q21.3,-11 21.4,-10.4L21.6,-9.5H31.9Q32.7,-9.5 32.5,-8.7L31.3,-3.5Q31.1,-2.8 30.4,-2.8H22.9L23.2,-1.5H30.3Q30.9,-1.5 30.9,-0.9Q30.9,-0.2 30.3,-0.2H22.4Q21.9,-0.2 21.8,-0.7L20,-9.7H18Q17.4,-9.7 17.4,-10.35Q17.4,-11 18,-11Z" fill="#c2c7d0"/><circle cx="23.3" cy="1" r="1.25" fill="#c2c7d0"/><circle cx="29.7" cy="1" r="1.25" fill="#c2c7d0"/></svg>
<span class="t" style="left:37.50px;top:341.00px;font-size:10px;color:#c2c7d0;transform:scaleX(1.032);-webkit-text-stroke:0.3px #c2c7d0;">Prescription</span>
<svg style="left:14px;top:334px" width="22" height="18" viewBox="14 -14 22 18"><path d="M21.3,-3.8V-9.2H24Q26.3,-9.2 26.3,-7.35Q26.3,-5.5 24,-5.5H21.6M23.9,-5.6L29.5,0.5M29.6,-4.6L24.7,0.5" fill="none" stroke="#c2c7d0" stroke-width="1.75"/></svg>
<span class="t" style="left:37.50px;top:370.00px;font-size:10px;color:#c2c7d0;transform:scaleX(0.9594);-webkit-text-stroke:0.3px #c2c7d0;">Sales</span>
<svg style="left:14px;top:363px" width="22" height="18" viewBox="14 -14 22 18"><path d="M21.1,-9H29.3M21.1,-6.2H29.3M22.5,-9Q26.7,-9 26.7,-6.2Q26.7,-3.3 22.8,-3.3H21.9L27.6,1" fill="none" stroke="#c2c7d0" stroke-width="1.7"/></svg>
<span class="t" style="left:37.50px;top:399.00px;font-size:10px;color:#c2c7d0;transform:scaleX(0.9804);-webkit-text-stroke:0.3px #c2c7d0;">Cash Entry</span>
<svg style="left:14px;top:392px" width="22" height="18" viewBox="14 -14 22 18"><path d="M21.1,-9H29.3M21.1,-6.2H29.3M22.5,-9Q26.7,-9 26.7,-6.2Q26.7,-3.3 22.8,-3.3H21.9L27.6,1" fill="none" stroke="#c2c7d0" stroke-width="1.7"/></svg>
<span class="t" style="left:37.50px;top:428.00px;font-size:10px;color:#c2c7d0;transform:scaleX(0.9562);-webkit-text-stroke:0.3px #c2c7d0;">Expenses</span>
<svg style="left:14px;top:421px" width="22" height="18" viewBox="14 -14 22 18"><path d="M21.1,-9H29.3M21.1,-6.2H29.3M22.5,-9Q26.7,-9 26.7,-6.2Q26.7,-3.3 22.8,-3.3H21.9L27.6,1" fill="none" stroke="#c2c7d0" stroke-width="1.7"/></svg>
<span class="t" style="left:37.50px;top:456.00px;font-size:10px;color:#c2c7d0;transform:scaleX(0.9996);-webkit-text-stroke:0.3px #c2c7d0;">Reports</span>
<svg style="left:14px;top:449px" width="22" height="18" viewBox="14 -14 22 18"><path d="M21.9,-6V-9.9H27.6L29.1,-8.4V-6" fill="none" stroke="#c2c7d0" stroke-width="1.4"/><rect x="18.9" y="-6.3" width="13.2" height="6" rx="1.3" fill="#c2c7d0"/><rect x="21.9" y="-2.5" width="7.2" height="3.8" fill="#343a40" stroke="#c2c7d0" stroke-width="1.4"/><rect x="20.5" y="-3.2" width="10" height=".7" fill="#343a40"/></svg>
<span class="t" style="left:37.50px;top:485.00px;font-size:10px;color:#c2c7d0;transform:scaleX(0.9775);-webkit-text-stroke:0.3px #c2c7d0;">Software Logs</span>
<svg style="left:14px;top:478px" width="22" height="18" viewBox="14 -14 22 18"><path d="M21.1,-7.6A5.4,5.4 0 1 1 22.3,-0.6" fill="none" stroke="#c2c7d0" stroke-width="1.65"/><path d="M18.9,-10.8L19.2,-5.8L23.8,-7.2Z" fill="#c2c7d0"/><path d="M25.9,-7.6V-4.4L27.9,-2.9" fill="none" stroke="#c2c7d0" stroke-width="1.4"/></svg>
<span class="t" style="left:37.50px;top:514.00px;font-size:10px;color:#c2c7d0;transform:scaleX(0.9933);-webkit-text-stroke:0.3px #c2c7d0;">Barcode</span>
<svg style="left:14px;top:507px" width="22" height="18" viewBox="14 -14 22 18"><rect x="18.9" y="-8.8" width="13.2" height="8.6" fill="#c2c7d0" opacity=".62"/><rect x="18.9" y="-8.8" width="1.5" height="8.6" fill="#c2c7d0" opacity=".8"/><rect x="20.9" y="-8.8" width="0.8" height="8.6" fill="#c2c7d0" opacity=".8"/><rect x="22.2" y="-8.8" width="2.0" height="8.6" fill="#c2c7d0" opacity=".8"/><rect x="24.7" y="-8.8" width="0.8" height="8.6" fill="#c2c7d0" opacity=".8"/><rect x="26.0" y="-8.8" width="2.0" height="8.6" fill="#c2c7d0" opacity=".8"/><rect x="28.5" y="-8.8" width="0.8" height="8.6" fill="#c2c7d0" opacity=".8"/><rect x="29.8" y="-8.8" width="0.8" height="8.6" fill="#c2c7d0" opacity=".8"/><rect x="31.0" y="-8.8" width="1.1" height="8.6" fill="#c2c7d0" opacity=".8"/></svg>
<span class="t" style="left:37.50px;top:543.00px;font-size:10px;color:#c2c7d0;transform:scaleX(1.0296);-webkit-text-stroke:0.3px #c2c7d0;">Logout</span>
<svg style="left:14px;top:536px" width="22" height="18" viewBox="14 -14 22 18"><path d="M23.2,-8.2H21.3Q19.8,-8.2 19.8,-6.7V-2.3Q19.8,-0.8 21.3,-0.8H23.2" fill="none" stroke="#c2c7d0" stroke-width="1.7" stroke-linecap="round"/><path d="M23,-6.3H27V-8.9L32.1,-4.5L27,-0.1V-2.7H23Z" fill="#c2c7d0" stroke="#c2c7d0" stroke-width=".4" stroke-linejoin="round"/></svg>
<svg style="left:145px;top:224.8px" width="6.4" height="8.6" viewBox="0 0 6.4 8.6"><path d="M4.6 1.6L1.9 4.3L4.6 7" fill="none" stroke="#c2c7d0" stroke-width="1.9" stroke-linejoin="round" stroke-linecap="round"/></svg>
<svg style="left:145px;top:253.8px" width="6.4" height="8.6" viewBox="0 0 6.4 8.6"><path d="M4.6 1.6L1.9 4.3L4.6 7" fill="none" stroke="#c2c7d0" stroke-width="1.9" stroke-linejoin="round" stroke-linecap="round"/></svg>
<svg style="left:145px;top:454.8px" width="6.4" height="8.6" viewBox="0 0 6.4 8.6"><path d="M4.6 1.6L1.9 4.3L4.6 7" fill="none" stroke="#c2c7d0" stroke-width="1.9" stroke-linejoin="round" stroke-linecap="round"/></svg>
<div style="left:1425.00px;top:0.00px;width:15.00px;height:900.00px;background:#fbfbfb"></div>
<svg style="left:1427.5px;top:4.1px" width="10" height="8" viewBox="0 0 10 8"><path d="M5 1.4L8.6 6.6H1.4z" fill="#8b8b8b" stroke="#8b8b8b" stroke-width="1.6" stroke-linejoin="round"/></svg>
<div style="left:1428px;top:18px;width:9px;height:713px;border-radius:4.5px;background:#8b8b8b"></div>
<svg style="left:1427.5px;top:888.4px" width="10" height="8" viewBox="0 0 10 8"><path d="M5 6.6L8.6 1.4H1.4z" fill="#8b8b8b" stroke="#8b8b8b" stroke-width="1.6" stroke-linejoin="round"/></svg>
<span class="t" style="left:1142.90px;top:771.00px;font-size:19px;color:rgba(125,125,125,.55);transform:scaleX(1.0477);">Activate Windows</span>
<span class="t" style="left:1142.90px;top:796.00px;font-size:14.2px;color:rgba(125,125,125,.55);transform:scaleX(1.0542);">Go to Settings to activate Windows.</span>
<svg style="left:765px;top:218px" width="24" height="28" viewBox="765 218 24 28"><path d="M771.3,222.2V238.7L775.5,235.2L778,240.2L780.4,239.3L778.4,234.5L782.7,234Z" fill="#fff" stroke="#15151c" stroke-width="1.1" stroke-linejoin="round"/></svg>
</body></html>
